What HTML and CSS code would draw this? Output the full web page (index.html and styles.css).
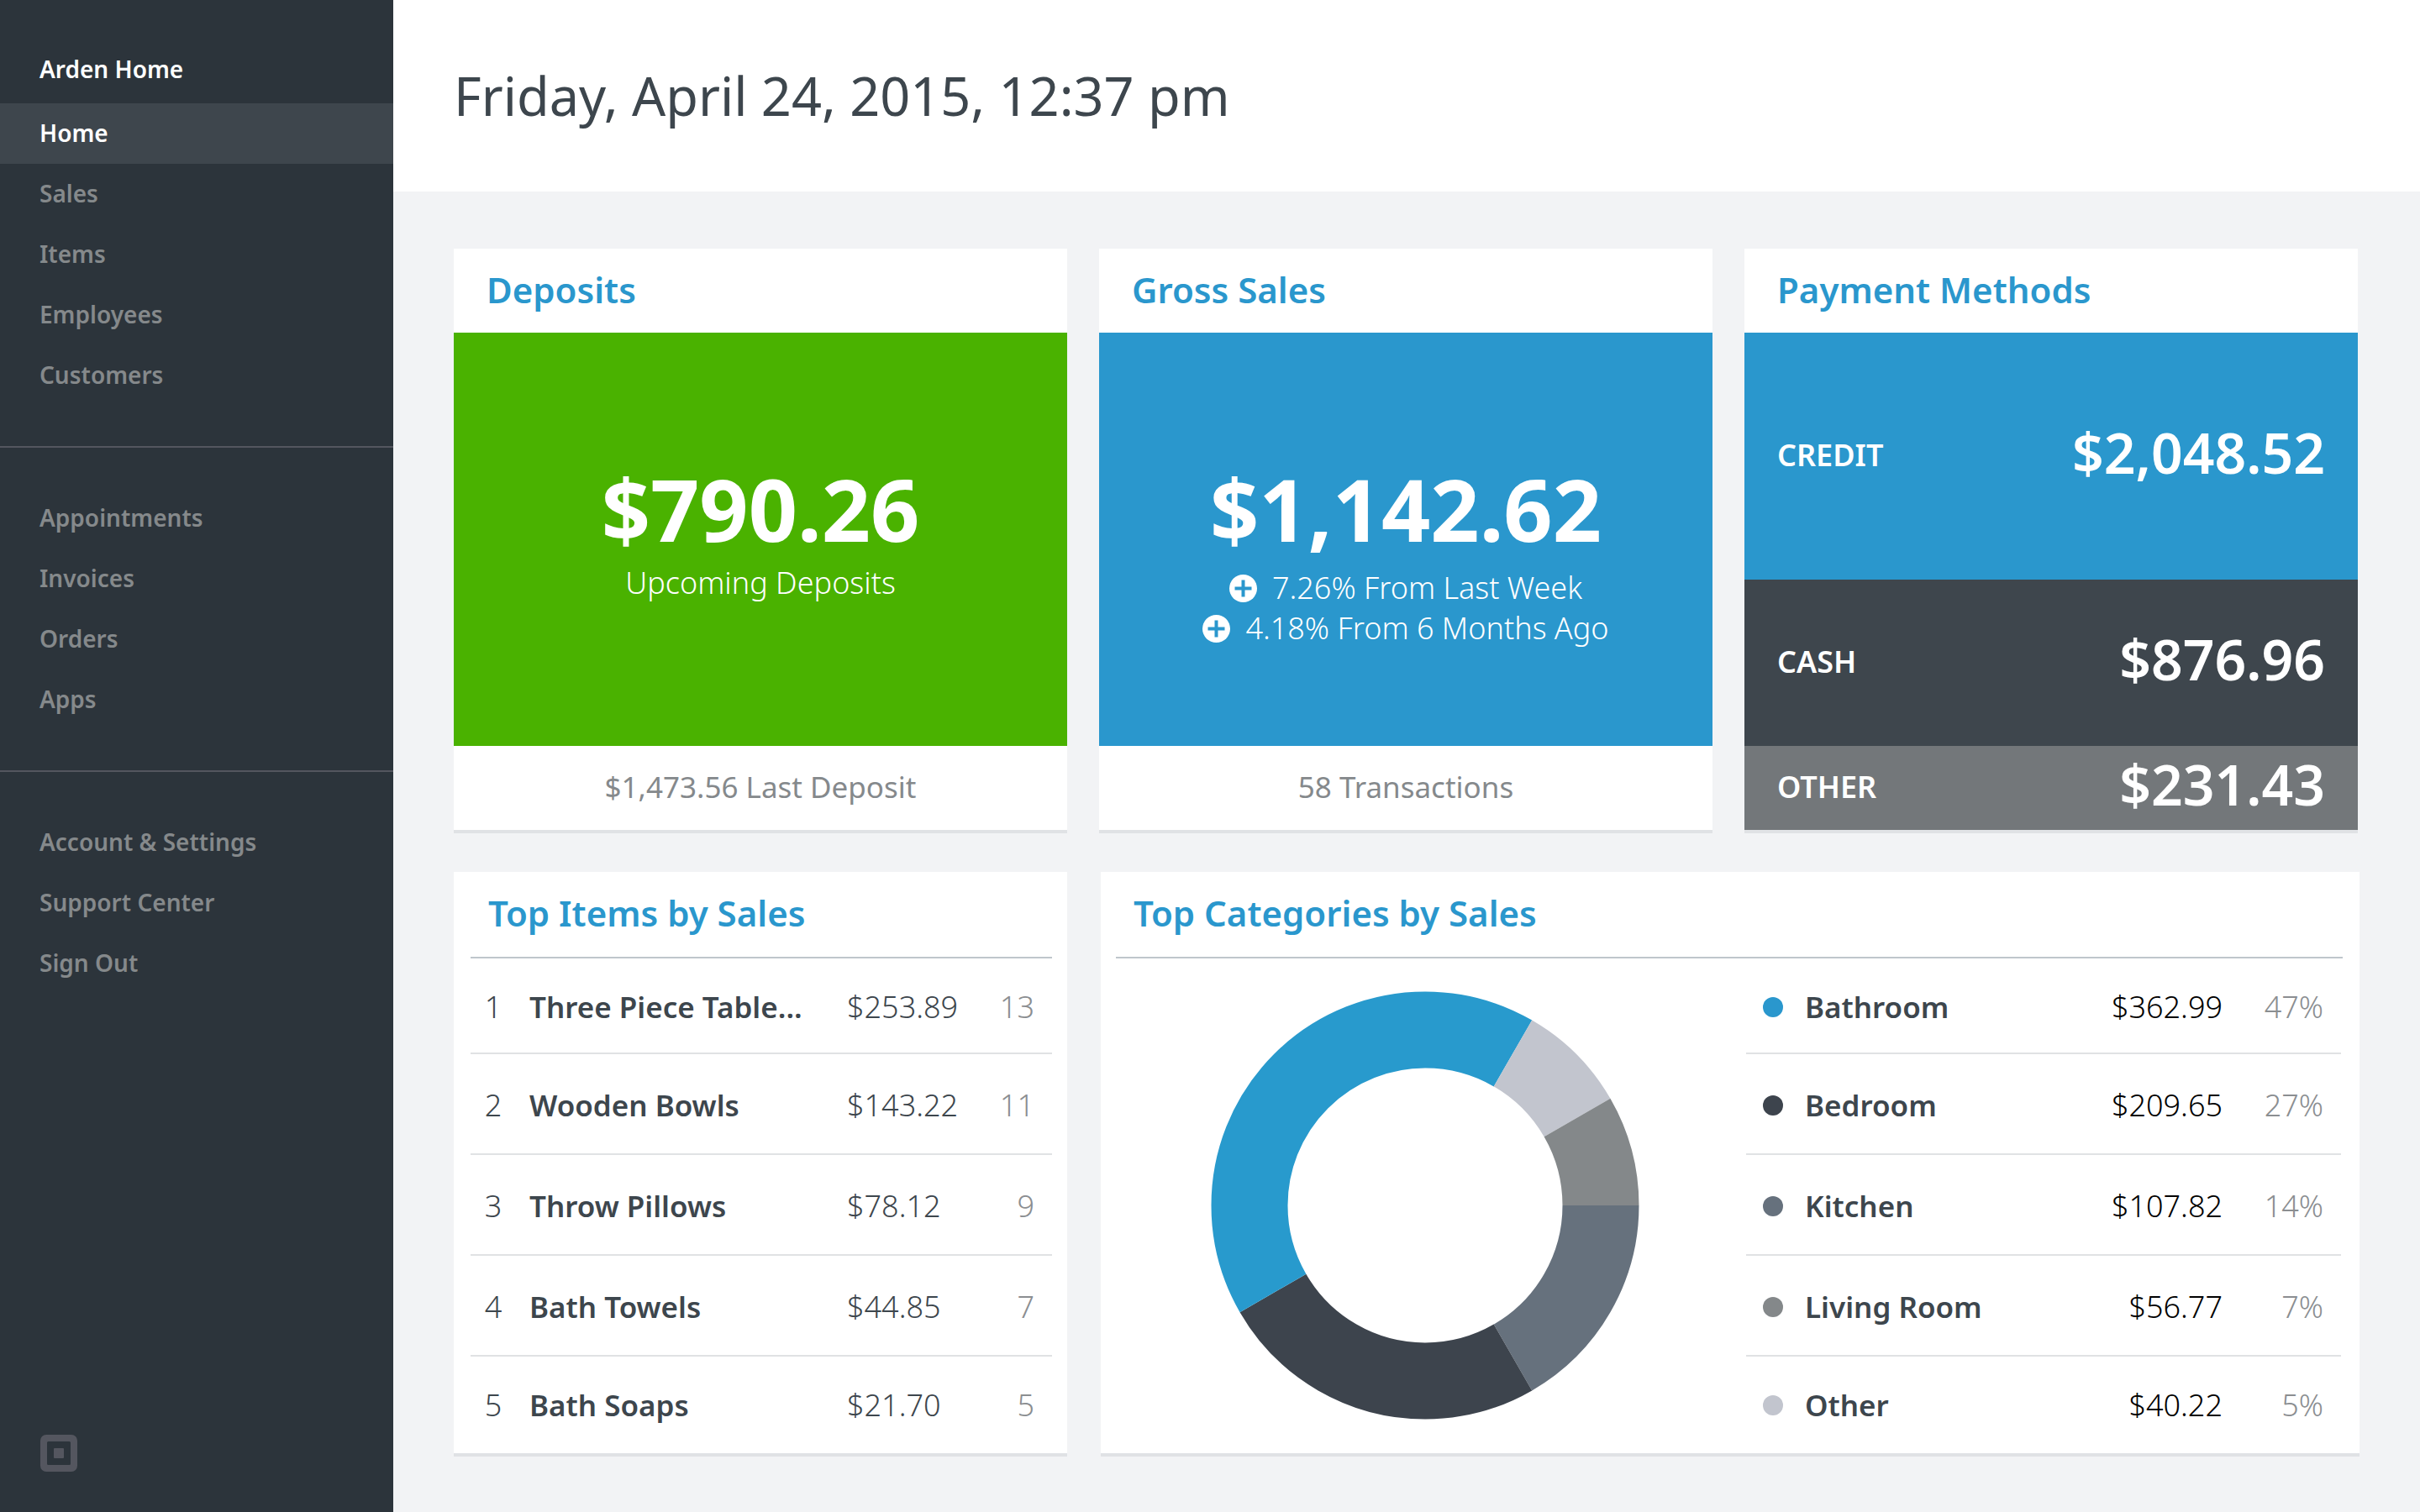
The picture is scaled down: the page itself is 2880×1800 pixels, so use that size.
FILE: index.html
```html
<!DOCTYPE html>
<html lang="en">
<head>
	<meta charset="UTF-8">
	<meta name="viewport" content="width=device-width, initial-scale=1">
	<title>Arden Home - Dashboard</title>
	<link rel="stylesheet" href="styles.css">
</head>
<body>

<!-- ***************** SIDEBAR ***************** -->
<nav class="sidebar">
	<p class="brand">Arden Home</p>
	<ul class="menu">
		<li><a class="active" href="#home">Home</a></li>
		<li><a href="#sales">Sales</a></li>
		<li><a href="#items">Items</a></li>
		<li><a href="#employees">Employees</a></li>
		<li><a href="#customers">Customers</a></li>
	</ul>
	<ul class="menu">
		<li><a href="#appointments">Appointments</a></li>
		<li><a href="#invoices">Invoices</a></li>
		<li><a href="#orders">Orders</a></li>
		<li><a href="#apps">Apps</a></li>
	</ul>
	<ul class="menu">
		<li><a href="#account">Account &amp; Settings</a></li>
		<li><a href="#support">Support Center</a></li>
		<li><a href="#signout">Sign Out</a></li>
	</ul>
	<svg class="logo" viewBox="0 0 44 44" aria-hidden="true">
		<path fill-rule="evenodd" d="M7 0h30a7 7 0 0 1 7 7v30a7 7 0 0 1-7 7H7a7 7 0 0 1-7-7V7a7 7 0 0 1 7-7zM9.500 8A1.500 1.500 0 0 0 8 9.500v25A1.500 1.500 0 0 0 9.500 36h25a1.500 1.500 0 0 0 1.500-1.500v-25A1.500 1.500 0 0 0 34.500 8z"/>
		<rect x="16" y="16" width="12" height="12" rx="1"/>
	</svg>
</nav>

<!-- ***************** MAIN ***************** -->
<main class="main">
	<header class="topbar">
		<h1>Friday, April 24, 2015, 12:37 pm</h1>
	</header>

	<div class="row summary">
		<section class="card">
			<h2>Deposits</h2>
			<div class="tile green">
				<p class="amount">$790.26</p>
				<p class="caption">Upcoming Deposits</p>
			</div>
			<p class="foot">$1,473.56 Last Deposit</p>
		</section>

		<section class="card">
			<h2>Gross Sales</h2>
			<div class="tile blue">
				<p class="amount">$1,142.62</p>
				<ul class="changes">
					<li>
						<svg class="plus" viewBox="0 0 33 33" aria-hidden="true"><circle cx="16.500" cy="16.500" r="16.500"/><path d="M16.500 6.500v20M6.500 16.500h20"/></svg>
						7.26% From Last Week
					</li>
					<li>
						<svg class="plus" viewBox="0 0 33 33" aria-hidden="true"><circle cx="16.500" cy="16.500" r="16.500"/><path d="M16.500 6.500v20M6.500 16.500h20"/></svg>
						4.18% From 6 Months Ago
					</li>
				</ul>
			</div>
			<p class="foot">58 Transactions</p>
		</section>

		<section class="card">
			<h2>Payment Methods</h2>
			<dl class="methods">
				<div class="method credit"><dt>CREDIT</dt><dd>$2,048.52</dd></div>
				<div class="method cash"><dt>CASH</dt><dd>$876.96</dd></div>
				<div class="method other"><dt>OTHER</dt><dd>$231.43</dd></div>
			</dl>
		</section>
	</div>

	<div class="row details">
		<section class="card">
			<div class="items">
				<h2>Top Items by Sales</h2>
				<table aria-label="Top Items by Sales">
					<tr><td class="rank">1</td><th scope="row">Three Piece Table...</th><td class="price">$253.89</td><td class="count">13</td></tr>
					<tr><td class="rank">2</td><th scope="row">Wooden Bowls</th><td class="price">$143.22</td><td class="count">11</td></tr>
					<tr><td class="rank">3</td><th scope="row">Throw Pillows</th><td class="price">$78.12</td><td class="count">9</td></tr>
					<tr><td class="rank">4</td><th scope="row">Bath Towels</th><td class="price">$44.85</td><td class="count">7</td></tr>
					<tr><td class="rank">5</td><th scope="row">Bath Soaps</th><td class="price">$21.70</td><td class="count">5</td></tr>
				</table>
			</div>
		</section>

		<section class="card">
			<h2 class="ruled">Top Categories by Sales</h2>
			<div class="categories">
				<div class="chart">
					<!-- each slice is a dash on a 360 unit circle, starting at 3 o'clock -->
					<svg class="donut" viewBox="0 0 510 510" role="img" aria-label="Share of sales by category">
						<circle class="s-kitchen" cx="255" cy="255" r="209" pathLength="360" stroke-dasharray="60 300"/>
						<circle class="s-bedroom" cx="255" cy="255" r="209" pathLength="360" stroke-dasharray="90 270" stroke-dashoffset="-60"/>
						<circle class="s-bathroom" cx="255" cy="255" r="209" pathLength="360" stroke-dasharray="150 210" stroke-dashoffset="-150"/>
						<circle class="s-other" cx="255" cy="255" r="209" pathLength="360" stroke-dasharray="30 330" stroke-dashoffset="-300"/>
						<circle class="s-living" cx="255" cy="255" r="209" pathLength="360" stroke-dasharray="30 330" stroke-dashoffset="-330"/>
					</svg>
				</div>
				<table class="legend" aria-label="Top Categories by Sales">
					<tr><td class="key"><span class="dot bathroom"></span></td><th scope="row">Bathroom</th><td class="price">$362.99</td><td class="count">47%</td></tr>
					<tr><td class="key"><span class="dot bedroom"></span></td><th scope="row">Bedroom</th><td class="price">$209.65</td><td class="count">27%</td></tr>
					<tr><td class="key"><span class="dot kitchen"></span></td><th scope="row">Kitchen</th><td class="price">$107.82</td><td class="count">14%</td></tr>
					<tr><td class="key"><span class="dot living"></span></td><th scope="row">Living Room</th><td class="price">$56.77</td><td class="count">7%</td></tr>
					<tr><td class="key"><span class="dot others"></span></td><th scope="row">Other</th><td class="price">$40.22</td><td class="count">5%</td></tr>
				</table>
			</div>
		</section>
	</div>
</main>

</body>
</html>
```
FILE: styles.css
```css
* { box-sizing: border-box; }
body {
	display: flex;
	min-height: 100vh;
	margin: 0;
	background-color: #f2f3f5;
	color: #3d464d;
	font-family: "Noto Sans", "Open Sans", sans-serif;
	font-size: 36px;
	line-height: 48px;
}
h1, h2, p, ul, dl, dd { margin: 0; padding: 0; }
ul { list-style: none; }

/* sidebar */
.sidebar {
	display: flex;
	flex-direction: column;
	flex: none;
	width: 468px;
	padding-bottom: 48px;
	background-color: #2c343b;
	font-size: 28px;
	font-weight: 600;
	line-height: 70px;
}
.brand { padding: 47px 47px 6px; color: #fff; }
.menu a { display: block; padding: 0 47px 2px; color: #85898b; text-decoration: none; }
.menu a.active { background-color: #3e464d; color: #fff; }
.menu + .menu { margin-top: 48px; padding-top: 48px; border-top: 2px solid #54565f; }
.logo { width: 44px; height: 44px; margin: auto 48px 0; fill: #54565f; }

/* main */
.main { flex: 1; min-width: 0; }
.topbar { display: flex; align-items: center; height: 228px; padding: 0 72px; background-color: #fff; }
h1 { font-size: 63px; font-weight: 400; line-height: 72px; }

.row { display: grid; }
.summary { grid-template-columns: repeat(3, 1fr); gap: 38px; padding: 68px 74px 0 72px; }
.details { grid-template-columns: calc((100% - 78px) / 3) 1fr; gap: 40px; padding: 46px 72px 64px; }

.card { display: flex; flex-direction: column; background-color: #fff; border-bottom: 4px solid #e0e2e5; }
h2 { padding: 0 39px 2px; color: #2a97cd; font-size: 42px; font-weight: 600; line-height: 98px; }
.items h2, h2.ruled { padding: 0 21px 3px; border-bottom: 2px solid #bfc6cc; }
h2.ruled { margin: 0 20px 0 18px; }

/* big number tiles */
.tile { flex: 1; min-height: 492px; padding: 152px 20px 0; color: #fff; text-align: center; }
.green { background-color: #4ab200; }
.blue { background-color: #2a97cd; }
.amount { font-size: 102px; font-weight: 700; line-height: 116px; }
.caption { margin-top: 6px; font-weight: 300; }
.changes { margin-top: 12px; font-weight: 300; }
.changes li { display: flex; align-items: center; justify-content: center; gap: 18px; }
.plus { width: 33px; height: 33px; fill: #fff; stroke: none; }
.plus path { stroke: #2a97cd; stroke-width: 4; }
.foot { color: #85898c; font-size: 35px; line-height: 98px; padding-bottom: 2px; text-align: center; }

/* payment methods */
.method { display: flex; align-items: center; justify-content: space-between; padding: 0 39px 3px; color: #fff; }
.method dt { font-weight: 600; }
.method dd { padding-bottom: 8px; font-size: 66px; font-weight: 600; line-height: 72px; }
.credit { height: 294px; background-color: #2a97cd; }
.cash { height: 198px; background-color: #3e464d; }
.other { height: 100px; background-color: #73777a; }

/* tables */
table { width: 100%; border-spacing: 0; }
td, th { height: 120px; padding: 3px 0 0; border-bottom: 2px solid #e0e2e4; font-weight: 300; vertical-align: middle; white-space: nowrap; }
tr:first-child > * { height: 114px; padding-top: 4px; }
tr:last-child > * { height: 115px; padding-top: 0; border-bottom: 0; }
th { padding-left: 16px; font-size: 35px; font-weight: 600; text-align: left; }
.items { padding: 0 18px 0 20px; }
.rank { width: 54px; text-align: center; }
.price { width: 144px; }
.count { width: 100px; padding-right: 21px; color: #8b8e91; text-align: right; }

.categories { display: flex; align-items: stretch; padding: 0 22px 0 4px; }
.chart { display: flex; flex: 1; align-items: center; justify-content: center; min-width: 0; padding-bottom: 2px; }
.donut { width: 510px; height: 510px; fill: none; stroke-width: 91; }
.s-bathroom { stroke: #289acd; }
.s-bedroom { stroke: #3d444d; }
.s-kitchen { stroke: #66717d; }
.s-living { stroke: #84888a; }
.s-other { stroke: #c2c5ce; }

.legend { flex: none; width: 708px; }
.legend th { padding-left: 6px; }
.legend .price { color: #000; text-align: right; }
.legend .count { width: 141px; }
.key { width: 64px; }
.dot { display: block; width: 24px; height: 24px; margin: 0 auto; border-radius: 50%; }
.bathroom { background-color: #2a97cd; }
.bedroom { background-color: #3d444d; }
.kitchen { background-color: #66717d; }
.living { background-color: #84888a; }
.others { background-color: #c2c5ce; }
```
